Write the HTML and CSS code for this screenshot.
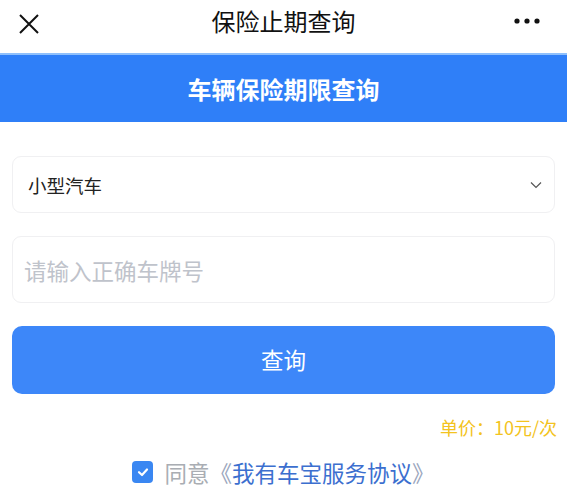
FILE: index.html
```html
<!DOCTYPE html>
<html lang="zh">
<head>
<meta charset="utf-8">
<link rel="stylesheet" href="styles.css">
</head>
<body>
<header class="nav">
  <svg class="nav-close" width="22" height="22" viewBox="0 0 22 22"><path d="M2 2 L20 20 M20 2 L2 20" stroke="#111" stroke-width="2" fill="none"/></svg>
  <div class="nav-title">保险止期查询</div>
  <svg class="nav-more" width="26" height="6" viewBox="0 0 26 6"><circle cx="3" cy="3" r="2.6" fill="#111"/><circle cx="13" cy="3" r="2.6" fill="#111"/><circle cx="23" cy="3" r="2.6" fill="#111"/></svg>
</header>
<section class="banner">车辆保险期限查询</section>
<main class="form">
  <div class="field select">
    <span class="select-text">小型汽车</span>
    <svg class="chev" width="12" height="8" viewBox="0 0 12 8"><path d="M1 1.5 L6 6.5 L11 1.5" stroke="#555" stroke-width="1.2" fill="none"/></svg>
  </div>
  <div class="field input">
    <span class="placeholder">请输入正确车牌号</span>
  </div>
  <button class="btn">查询</button>
  <div class="price">单价：10元/次</div>
  <div class="agree">
    <span class="check"><svg width="14" height="14" viewBox="0 0 14 14"><path d="M3 7.2 L6 10 L11 4.5" stroke="#fff" stroke-width="2.2" fill="none" stroke-linecap="round" stroke-linejoin="round"/></svg></span>
    <span class="agree-text">同意</span><span class="bracket">《</span><span class="link">我有车宝服务协议</span><span class="bracket">》</span>
  </div>
</main>
</body>
</html>
```
FILE: styles.css
```css
* { box-sizing: border-box; }
html, body { margin: 0; padding: 0; background: #fff; }
body { font-family: "Noto Sans CJK SC", "Noto Sans", sans-serif; width: 567px; overflow: hidden; }
.nav { height: 53px; display: flex; align-items: center; justify-content: space-between; padding: 0 27px 2px 18px; position: relative; }
.nav-close { display: block; margin-top: -3px; }
.nav-title { position: absolute; left: 0; right: 0; top: 0; height: 42px; line-height: 42px; text-align: center; font-size: 24px; color: #111; }
.nav-more { display: block; margin-top: -10px; }
.banner { height: 69px; background: #2f7ff8; border-top: 2px solid #8fc0fc; color: #fff; font-size: 24px; font-weight: bold; display: flex; align-items: center; justify-content: center; padding-bottom: 1px; }
.form { padding: 34px 12px 0; display: flex; flex-direction: column; }
.field { border: 1px solid #f0f0f2; border-radius: 9px; display: flex; align-items: center; }
.select { height: 57px; padding: 0 12px 0 15px; justify-content: space-between; }
.select-text { font-size: 18.5px; color: #222; }
.chev { display: block; }
.input { height: 67px; margin-top: 23px; padding: 0 11px; }
.placeholder { font-size: 22.5px; color: #bfc3cb; }
.btn { margin-top: 23px; height: 68px; border: 0; border-radius: 10px; background: #3d87f9; color: #fff; font-family: inherit; font-size: 22.5px; padding: 0 0 2px; }
.price { margin-top: 21px; text-align: right; font-size: 18px; color: #f3c320; line-height: 24px; margin-right: -2px; }
.agree { margin-top: 18px; display: flex; align-items: center; justify-content: center; font-size: 22.5px; line-height: 30px; }
.check { width: 21px; height: 22px; border-radius: 4px; background: #3a87f2; display: flex; align-items: center; justify-content: center; margin-right: 11px; }
.check svg { display: block; }
.agree-text { color: #a9adb3; }
.bracket { color: #9aa6bd; }
.link { color: #3c6fcf; }
```
